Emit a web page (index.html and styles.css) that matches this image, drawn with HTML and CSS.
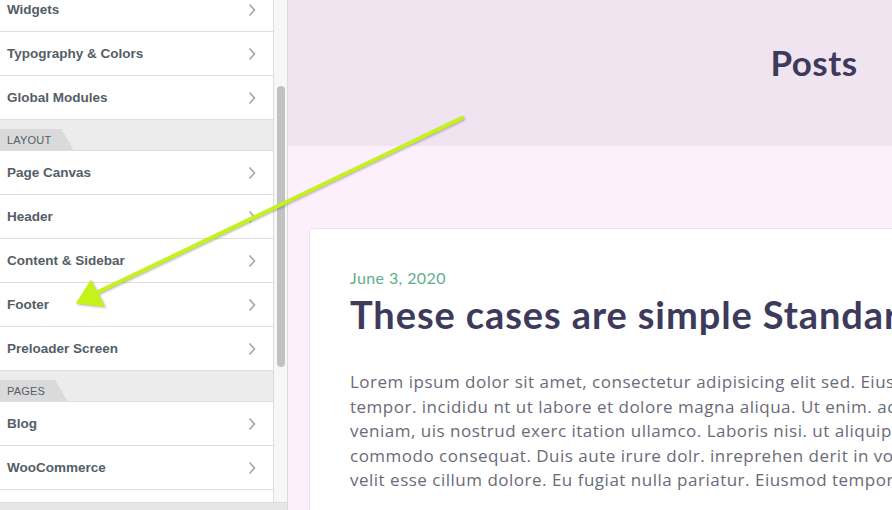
FILE: index.html
```html
<!DOCTYPE html>
<html lang="en">
<head>
<meta charset="utf-8">
<title>Customizer</title>
<link rel="stylesheet" href="styles.css">
</head>
<body>
<div class="sidebar">
  <div class="sidebar-top">
    <div class="panel">
      <ul class="list">
        <li class="row"><span>Widgets</span><svg class="chev" viewBox="0 0 8 14"><path d="M1.5 1.5 L6.5 7 L1.5 12.5"/></svg></li>
        <li class="row"><span>Typography &amp; Colors</span><svg class="chev" viewBox="0 0 8 14"><path d="M1.5 1.5 L6.5 7 L1.5 12.5"/></svg></li>
        <li class="row"><span>Global Modules</span><svg class="chev" viewBox="0 0 8 14"><path d="M1.5 1.5 L6.5 7 L1.5 12.5"/></svg></li>
        <li class="section"><span class="tab">Layout</span></li>
        <li class="row"><span>Page Canvas</span><svg class="chev" viewBox="0 0 8 14"><path d="M1.5 1.5 L6.5 7 L1.5 12.5"/></svg></li>
        <li class="row"><span>Header</span><svg class="chev" viewBox="0 0 8 14"><path d="M1.5 1.5 L6.5 7 L1.5 12.5"/></svg></li>
        <li class="row"><span>Content &amp; Sidebar</span><svg class="chev" viewBox="0 0 8 14"><path d="M1.5 1.5 L6.5 7 L1.5 12.5"/></svg></li>
        <li class="row"><span>Footer</span><svg class="chev" viewBox="0 0 8 14"><path d="M1.5 1.5 L6.5 7 L1.5 12.5"/></svg></li>
        <li class="row"><span>Preloader Screen</span><svg class="chev" viewBox="0 0 8 14"><path d="M1.5 1.5 L6.5 7 L1.5 12.5"/></svg></li>
        <li class="section"><span class="tab">Pages</span></li>
        <li class="row"><span>Blog</span><svg class="chev" viewBox="0 0 8 14"><path d="M1.5 1.5 L6.5 7 L1.5 12.5"/></svg></li>
        <li class="row"><span>WooCommerce</span><svg class="chev" viewBox="0 0 8 14"><path d="M1.5 1.5 L6.5 7 L1.5 12.5"/></svg></li>
        <li class="row"><span></span></li>
      </ul>
    </div>
    <div class="track"><div class="thumb"></div></div>
  </div>
  <div class="footer-bar"></div>
</div>
<div class="main">
  <div class="page">
    <header class="hero"><h1 class="hero-title">Posts</h1></header>
    <article class="card">
      <div class="date">June 3, 2020</div>
      <h2 class="post-title">These cases are simple Standard Post</h2>
      <p class="excerpt">Lorem ipsum dolor sit amet, consectetur adipisicing elit sed. Eiusmod<br>tempor. incididu nt ut labore et dolore magna aliqua. Ut enim. ad minim<br>veniam, uis nostrud exerc itation ullamco. Laboris nisi. ut aliquip ex ea<br>commodo consequat. Duis aute irure dolr. inreprehen derit in voluptate<br>velit esse cillum dolore. Eu fugiat nulla pariatur. Eiusmod tempor.</p>
    </article>
  </div>
</div>
<svg class="arrow" viewBox="0 0 480 320" width="480" height="320">
  <line x1="462" y1="118" x2="94" y2="294" class="arrow-line"/>
  <polygon points="77,303 91,281 104,306" class="arrow-head"/>
</svg>
</body>
</html>
```

FILE: styles.css
```css
* { box-sizing: border-box; }
html, body { margin: 0; padding: 0; }
body {
  width: 892px;
  height: 510px;
  overflow: hidden;
  display: flex;
  position: relative;
  background: #fff;
}
.sidebar {
  width: 288px;
  flex: none;
  display: flex;
  flex-direction: column;
  border-right: 1px solid #dcdcdc;
  background: #f7f7f7;
}
.sidebar-top {
  flex: 1;
  display: flex;
  overflow: hidden;
}
.panel {
  width: 274px;
  flex: none;
  background: #fff;
  border-right: 1px solid #dddddd;
  overflow: hidden;
}
.list {
  list-style: none;
  margin: -12px 0 0 0;
  padding: 0;
}
.row {
  height: 44px;
  border-bottom: 1px solid #dedede;
  display: flex;
  align-items: center;
  justify-content: space-between;
  padding: 0 17px 0 7px;
  font-family: "Liberation Sans", Arial, sans-serif;
  font-size: 13.5px;
  font-weight: 700;
  color: #555d66;
}
.chev {
  width: 8px;
  height: 14px;
  fill: none;
  stroke: #a0a5aa;
  stroke-width: 1.6;
}
.section {
  height: 31px;
  background: #ececec;
  border-bottom: 1px solid #dedede;
  display: flex;
  align-items: flex-end;
}
.tab {
  display: inline-block;
  height: 21px;
  line-height: 22px;
  padding: 0 22px 0 7px;
  background: #dadada;
  clip-path: polygon(0 0, calc(100% - 12px) 0, 100% 100%, 0 100%);
  font-family: "Liberation Sans", Arial, sans-serif;
  font-size: 11px;
  color: #555d66;
  text-transform: uppercase;
  letter-spacing: 0.2px;
}
.track {
  width: 13px;
  flex: none;
  background: #f7f7f7;
  padding: 86px 2px 0 3px;
}
.thumb {
  width: 8px;
  height: 281px;
  border-radius: 4px;
  background: #c1c1c1;
}
.footer-bar {
  height: 8px;
  flex: none;
  background: #e6e6e6;
  border-top: 1px solid #dcdcdc;
}
.main {
  flex: 1;
  overflow: hidden;
  background: #fdf0fd;
}
.page {
  width: 1052px;
}
.hero {
  height: 146px;
  background: #f1e4f1;
  padding-top: 40px;
  text-align: center;
}
.hero-title {
  margin: 0;
  font-family: Lato, "Open Sans", sans-serif;
  font-weight: 700;
  font-size: 35px;
  line-height: 44px;
  letter-spacing: 0.5px;
  color: #3d3a5c;
}
.card {
  margin: 82px 21px 0 21px;
  background: #fff;
  border: 1px solid #ebe2ed;
  border-radius: 4px;
  padding: 38px 40px 40px 40px;
  height: 320px;
}
.date {
  font-family: Lato, "Open Sans", sans-serif;
  font-size: 16px;
  letter-spacing: 0.4px;
  color: #5fae8a;
  line-height: 22px;
}
.post-title {
  margin: 3px 0 0 0;
  font-family: Lato, "Open Sans", sans-serif;
  font-weight: 700;
  font-size: 38px;
  line-height: 44px;
  letter-spacing: 0.9px;
  color: #3d3a5c;
  white-space: nowrap;
}
.excerpt {
  margin: 34px 0 0 0;
  font-family: "Open Sans", Lato, sans-serif;
  font-size: 17px;
  line-height: 24.5px;
  letter-spacing: 0.5px;
  color: #6b6a78;
  white-space: nowrap;
}
.arrow {
  position: absolute;
  left: 0;
  top: 0;
  pointer-events: none;
  filter: drop-shadow(1px 1.5px 1px rgba(60, 40, 80, 0.35));
}
.arrow-line {
  stroke: #c6f21c;
  stroke-width: 4;
  stroke-linecap: round;
}
.arrow-head {
  fill: #c6f21c;
  stroke: #c6f21c;
  stroke-width: 1.5;
  stroke-linejoin: round;
}
```
